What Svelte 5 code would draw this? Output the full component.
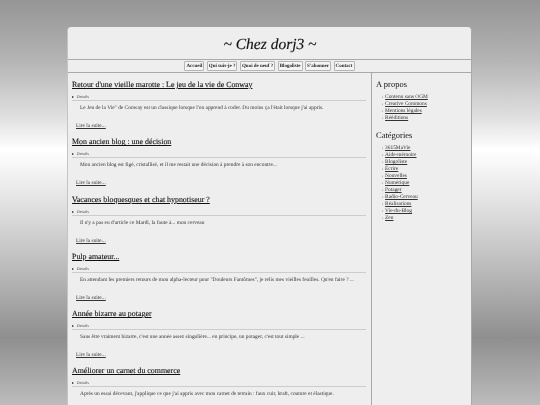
<script lang="ts">
  const nav = ['Accueil', 'Qui suis-je ?', 'Quoi de neuf ?', 'Blogoliste', "S'abonner", 'Contact'];

  const posts = [
    { title: "Retour d'une vieille marotte : Le jeu de la vie de Conway", text: "Le Jeu de la Vie\" de Conway est un classique lorsque l'on apprend à coder. Du moins ça l'était lorsque j'ai appris." },
    { title: 'Mon ancien blog : une décision', text: "Mon ancien blog est figé, cristallisé, et il me restait une décision à prendre à son encontre..." },
    { title: 'Vacances bloquesques et chat hypnotiseur ?', text: "Il n'y a pas eu d'article ce Mardi, la faute à... mon cerveau" },
    { title: 'Pulp amateur...', text: "En attendant les premiers retours de mon alpha-lecteur pour \"Douleurs Fantômes\", je relis mes vieilles feuilles. Qu'en faire ? ..." },
    { title: 'Année bizarre au potager', text: "Sans être vraiment bizarre, c'est une année assez singulière... en principe, un potager, c'est tout simple ..." },
    { title: 'Améliorer un carnet du commerce', text: "Après un essai décevant, j'applique ce que j'ai appris avec mon carnet de terrain : faux cuir, kraft, couture et élastique." }
  ];

  const about = ['Contenu sans OGM', 'Creative Commons', 'Mentions légales', 'Rééditions'];
  const categories = ['3615MaVie', 'Aide-mémoire', 'Blogoliste', 'Écrire', 'Nouvelles', 'Numérique', 'Potager', 'Radio-Cerveau', 'Réalisations', 'Vie-du-Blog', 'Zen'];
</script>

<div class="page">
  <div class="wrap">
    <header>~ Chez dorj3 ~</header>
    <nav>
      {#each nav as item}
        <a href="#top" class="btn">{item}</a>
      {/each}
    </nav>
    <div class="columns">
      <main>
        {#each posts as post}
          <article>
            <h2><a href="#top">{post.title}</a></h2>
            <div class="details"><span class="arrow"></span>Details</div>
            <p>{post.text}</p>
            <a href="#top" class="more">Lire la suite...</a>
          </article>
        {/each}
      </main>
      <aside>
        <h3>A propos</h3>
        <ul>
          {#each about as item}
            <li><a href="#top">{item}</a></li>
          {/each}
        </ul>
        <h3>Catégories</h3>
        <ul>
          {#each categories as item}
            <li><a href="#top">{item}</a></li>
          {/each}
        </ul>
      </aside>
    </div>
  </div>
</div>

<style>
  :global(body) {
    margin: 0;
    overflow: hidden;
  }

  .page {
    height: 405px;
    overflow: hidden;
    padding-top: 27px;
    box-sizing: border-box;
    background: linear-gradient(180deg, #959595 0, #b4b4b4 60px, #dedede 115px, #fff 150px, #e4e4e4 200px, #bdbdbd 265px, #8f8f8f 338px, #bcbcbc 405px);
    font-family: "Liberation Serif", serif;
    color: #333;
    text-rendering: geometricPrecision;
  }

  .wrap {
    width: 403px;
    margin-left: 67px;
    background: #eee;
    border-radius: 4px 4px 0 0;
    border-left: 1px solid #c4c4c4;
    border-right: 1px solid #aaa;
    filter: blur(0.5px);
  }

  header {
    height: 32px;
    line-height: 36px;
    padding-left: 1px;
    box-sizing: border-box;
    text-align: center;
    font-size: 15.5px;
    font-style: italic;
    color: #111;
    -webkit-text-stroke: 0.15px #111;
  }

  nav {
    display: flex;
    justify-content: center;
    gap: 2.5px;
    height: 12px;
    align-items: center;
    border-top: 1px solid #aaa;
    border-bottom: 1px solid #aaa;
  }

  .btn {
    font-size: 5px;
    font-weight: bold;
    color: #222;
    text-decoration: none;
    border: 1px solid #b4b4b4;
    border-radius: 1px;
    padding: 0.5px 1px;
    line-height: 7px;
    background: #f4f4f4;
  }

  .columns {
    display: flex;
  }

  main {
    width: 304px;
    box-sizing: border-box;
    padding: 5px 5px 0 4px;
    border-right: 1px solid #aaa;
  }

  article {
    height: 57.3px;
  }

  h2 {
    margin: 0;
    font-size: 7.9px;
    font-weight: normal;
    line-height: 13px;
    -webkit-text-stroke: 0.1px #111;
  }

  h2 a {
    color: #111;
  }

  .details {
    font-size: 4.4px;
    line-height: 6px;
    margin-top: 3px;
    color: #555;
    border-bottom: 1px solid #ccc;
    display: flex;
    align-items: center;
    gap: 2.5px;
  }

  .arrow {
    border-left: 2px solid #222;
    border-top: 1px solid transparent;
    border-bottom: 1px solid transparent;
  }

  p {
    margin: 4px 0 0 8px;
    font-size: 5.4px;
    line-height: 7px;
    color: #333;
  }

  .more {
    display: block;
    width: fit-content;
    margin: 11px 0 0 4px;
    font-size: 5.4px;
    line-height: 7px;
    color: #333;
  }

  aside {
    flex: 1;
    padding: 5px 4px 0 4px;
  }

  h3 {
    margin: 0;
    font-size: 8.5px;
    font-weight: normal;
    line-height: 13px;
    color: #111;
  }

  ul {
    list-style: none;
    margin: 3px 0 7px;
    padding: 0 0 0 6px;
  }

  li {
    height: 7px;
    font-size: 5.4px;
    line-height: 7px;
    color: #333;
  }

  li::before {
    content: "▪";
    margin-right: 2px;
    font-size: 3px;
    line-height: 1px;
    color: #666;
  }

  li a {
    color: #333;
  }
</style>
